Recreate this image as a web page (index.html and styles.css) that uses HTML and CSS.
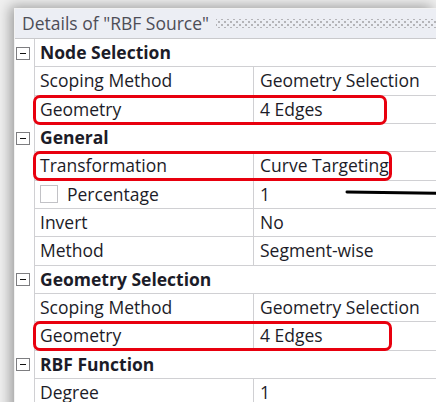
FILE: index.html
```html
<!DOCTYPE html>
<html lang="en">
<head>
<meta charset="utf-8">
<title>Details of "RBF Source"</title>
<link rel="stylesheet" href="styles.css">
</head>
<body>
<div class="panel">
  <div class="titlebar">
    <span class="title">Details of "RBF Source"</span>
    <span class="grip"></span>
  </div>
  <div class="grid">
    <div class="row group"><span class="gutter"><span class="toggle"></span></span><span class="name">Node Selection</span></div>
    <div class="row"><span class="gutter"></span><span class="name">Scoping Method</span><span class="value">Geometry Selection</span></div>
    <div class="row"><span class="gutter"></span><span class="name">Geometry</span><span class="value">4 Edges</span><span class="mark mark-short"></span></div>
    <div class="row group"><span class="gutter"><span class="toggle"></span></span><span class="name">General</span></div>
    <div class="row"><span class="gutter"></span><span class="name">Transformation</span><span class="value">Curve Targeting</span><span class="mark mark-long"></span></div>
    <div class="row"><span class="gutter"></span><span class="name"><span class="check"></span>Percentage</span><span class="value">1</span>
      <svg class="pointer" width="110" height="12" viewBox="0 0 110 12"><line x1="2" y1="5" x2="110" y2="6.5" stroke="#000" stroke-width="3" stroke-linecap="round"/></svg>
    </div>
    <div class="row"><span class="gutter"></span><span class="name">Invert</span><span class="value">No</span></div>
    <div class="row"><span class="gutter"></span><span class="name">Method</span><span class="value">Segment-wise</span></div>
    <div class="row group"><span class="gutter"><span class="toggle"></span></span><span class="name">Geometry Selection</span></div>
    <div class="row"><span class="gutter"></span><span class="name">Scoping Method</span><span class="value">Geometry Selection</span></div>
    <div class="row"><span class="gutter"></span><span class="name">Geometry</span><span class="value">4 Edges</span><span class="mark mark-long"></span></div>
    <div class="row group"><span class="gutter"><span class="toggle"></span></span><span class="name">RBF Function</span></div>
    <div class="row"><span class="gutter"></span><span class="name">Degree</span><span class="value">1</span></div>
  </div>
</div>
</body>
</html>
```

FILE: styles.css
```css
html, body {
  margin: 0;
  height: 100%;
  overflow: hidden;
}

body {
  background: #f0f0f0;
  font-family: "Open Sans", "Noto Sans", sans-serif;
  color: #1c1c28;
}

.panel {
  margin: 8px 0 0 14px;
  background: #fff;
  border-left: 1px solid #f2f2f2;
  border-top: 1px solid #f2f2f2;
  box-shadow: -4px -2px 12px rgba(0, 0, 0, 0.34);
  height: 420px;
}

/* window caption with the drag grip */
.titlebar {
  display: flex;
  align-items: center;
  height: 30px;
  box-sizing: border-box;
  padding-left: 7px;
  background: #eceef4;
  border-bottom: 1px solid #c9c9cc;
}

.title {
  font-size: 17.5px;
  color: #4d4d57;
  white-space: nowrap;
  line-height: 1;
}

.grip {
  flex: 1;
  height: 9px;
  margin-left: 7px;
  background-image:
    radial-gradient(circle, #b4b4b8 0.9px, transparent 1.3px),
    radial-gradient(circle, #b4b4b8 0.9px, transparent 1.3px);
  background-size: 6px 6px, 6px 6px;
  background-position: 0 0, 3px 3px;
}

/* property grid */
.row {
  position: relative;
  display: grid;
  grid-template-columns: 20px 219px 1fr;
  height: 28.33px;
  font-size: 17.5px;
  line-height: 1;
}

.gutter {
  border-right: 1px solid #d0d0d3;
  display: flex;
  align-items: center;
  justify-content: center;
  padding-right: 3px;
}

.name, .value {
  display: flex;
  align-items: center;
  padding-left: 5px;
  border-bottom: 1px solid #d0d0d3;
  white-space: nowrap;
  overflow: hidden;
}

.value {
  padding-left: 6px;
}

.name {
  border-right: 1px solid #d0d0d3;
}

.group .name {
  grid-column: 2 / 4;
  border-right: none;
  font-weight: 700;
}

.toggle {
  position: relative;
  width: 12px;
  height: 11px;
  border: 1px solid #7d7d80;
  background: #fff;
}

.toggle::after {
  content: "";
  position: absolute;
  left: 3px;
  right: 3px;
  top: 5px;
  height: 1px;
  background: #111;
}

.check {
  width: 16px;
  height: 16px;
  border: 1px solid #c2c2c6;
  margin-right: 9px;
}

/* highlight frames drawn over annotated rows */
.mark {
  position: absolute;
  left: 18px;
  top: -1px;
  height: 30px;
  box-sizing: border-box;
  border: 3px solid #e8000e;
  border-radius: 7px;
  pointer-events: none;
}

.mark-short { width: 354px; }
.mark-long { width: 359px; }

.pointer {
  position: absolute;
  left: 330px;
  top: 6px;
}
```
